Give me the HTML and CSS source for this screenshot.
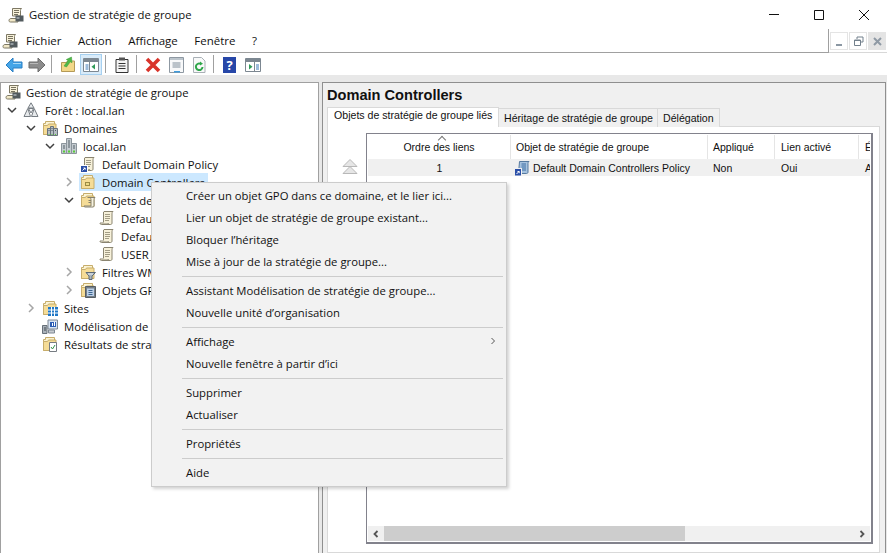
FILE: index.html
```html
<!DOCTYPE html>
<html lang="fr">
<head>
  <meta charset="UTF-8" />
  <title>Gestion de stratégie de groupe</title>
  <link rel="stylesheet" href="styles.css">
</head>
<body>
  <svg class="defs" width="0" height="0">
    <symbol id="i-scroll" viewBox="0 0 16 16">
      <path d="M5 1.500h9c-.8.6-1 1.300-1 2.300V13c0 1-.7 1.500-1.500 1.500h-9C1.700 14.500 1 14 1 13h8c0 .8.500 1 1 1" fill="#f7f1da" stroke="#8a8470"/>
      <path d="M5 1.500c-.6.400-1 1-1 2V13h6V3.500c0-1 .4-1.500 1-2z" fill="#f7f1da"/>
      <path d="M4.500 1.800V12.500M5 1.500h9" fill="none" stroke="#8a8470"/>
      <path d="M6 4.500h5M6 6.500h5M6 8.500h5M6 10.500h4" stroke="#a39d86"/>
    </symbol>
    <symbol id="i-link" viewBox="0 0 16 16">
      <use href="#i-scroll"/>
      <rect x="0" y="9" width="8" height="7" fill="#fff"/>
      <rect x="1" y="10" width="6" height="6" fill="#2b4fa8"/>
      <path d="M2.500 14.500l2.500-2.500M3.500 12h1.700v1.700" stroke="#fff" fill="none"/>
    </symbol>
    <symbol id="i-console" viewBox="0 0 16 16">
      <path d="M4.500 1.500h9c-.6.500-1 1-1 2V9h-8z" fill="#f7f1da" stroke="#7d7864"/>
      <path d="M1 13.500c0-1 .8-2 2-2h7v3.500H2.500C1.500 15 1 14.500 1 13.500z" fill="#f1e8c8" stroke="#7d7864"/>
      <path d="M6 3.500h5M6 5.500h5M6 7.500h4" stroke="#77725e"/>
      <rect x="7.500" y="8.500" width="8" height="6" fill="#525a5e"/>
      <rect x="8.500" y="10.500" width="3" height="1" fill="#d3dcdf"/>
    </symbol>
    <symbol id="i-folder" viewBox="0 0 16 16">
      <path d="M1.500 14.500V3.500h2V1.500h9v4h1v9z" fill="#fbf3d3" stroke="#c7ad6b"/>
      <path d="M1.500 14.500V5.500h4l1-1.500h7.500v10.500z" fill="#f5dc97" stroke="#c7ad6b"/>
    </symbol>
    <symbol id="i-ou" viewBox="0 0 16 16">
      <use href="#i-folder"/>
      <rect x="5" y="8" width="5" height="4" fill="#9c8a44"/>
      <rect x="6" y="9" width="3" height="2" fill="#ecd884"/>
    </symbol>
    <symbol id="i-servers" viewBox="0 0 16 16">
      <path d="M.5 5.500h5v10h-5zM5.500.5h5v15h-5zM10.500 5.500h5v10h-5z" fill="#c4cbd0" stroke="#8c959c"/>
      <path d="M2 8h2M2 10h2M7 3h2M7 5h2M7 7h2M7 9h2M12 8h2M12 10h2" stroke="#556068"/>
      <path d="M2 13.500h2M7 13.500h2M12 13.500h2" stroke="#59cc3a" stroke-width="2"/>
    </symbol>
    <symbol id="i-domains" viewBox="0 0 16 16">
      <use href="#i-folder"/>
      <path d="M5.500 8.500h3v7h-3zM8.500 6.500h3v9h-3zM11.500 8.500h4v7h-4z" fill="#b6bec4" stroke="#69737b"/>
      <path d="M6.500 14.500h1M9.500 14.500h1M13 14.500h1" stroke="#59cc3a"/>
      <path d="M6.500 10.500h1M9.500 8.500h1M9.500 10.500h1M13 10.500h1" stroke="#4e565e"/>
    </symbol>
    <symbol id="i-forest" viewBox="0 0 16 16">
      <path d="M8 .8l3 5.200H5z" fill="#e6e9eb" stroke="#777d83"/>
      <path d="M4.800 6.500L1 14.500h6.500zM11.200 6.500L15 14.500H8.500z" fill="#e6e9eb" stroke="#777d83"/>
      <path d="M5.500 6.500h5L8 11z" fill="#f6f7f8" stroke="#777d83"/>
    </symbol>
    <symbol id="i-gpos" viewBox="0 0 16 16">
      <use href="#i-folder"/>
      <path d="M7.500 5.500h7.500c-.6.500-1 1-1 2V14c0 .7-.5 1-1 1H5c-.6 0-1-.4-1-1h7V7.500c0-.8-.5-1.500-1-2" fill="#f8f3df" stroke="#85806c"/>
      <path d="M8.500 8.500h2.500M8.500 10.500h2.500" stroke="#85806c"/>
    </symbol>
    <symbol id="i-filter" viewBox="0 0 16 16">
      <use href="#i-folder"/>
      <path d="M6 8.500h9.500L12 12v3.500h-3V12z" fill="#aab4bd" stroke="#5c6a77"/>
      <path d="M8 10h5" stroke="#e8eef2"/>
    </symbol>
    <symbol id="i-gpo-box" viewBox="0 0 16 16">
      <use href="#i-folder"/>
      <path d="M5.500 4.500h10v11h-10z" fill="#757f88" stroke="#565d64"/>
      <path d="M7 6.500h7v7.500H7z" fill="#bcd0e8"/>
      <path d="M8.500 8.500h4M8.500 10.500h4M8.500 12.500h4" stroke="#3d658f"/>
    </symbol>
    <symbol id="i-sites" viewBox="0 0 16 16">
      <use href="#i-folder"/>
      <path d="M6 7h10v9H6z" fill="#1f77c6"/>
      <path d="M9.500 7v9M12.500 7v9M6 10h10M6 13h10" stroke="#fff"/>
    </symbol>
    <symbol id="i-model" viewBox="0 0 16 16">
      <path d="M6 2h9.500v9H6z" fill="#d6e3f3" stroke="#7e8894"/>
      <rect x="8" y="4" width="6" height="5" fill="#2b5db4"/>
      <path d="M10 5h1v3h-1zM12 4h1v4h-1z" fill="#fff"/>
      <path d="M.5 7.500h4.500v8H.5z" fill="#aab2ba" stroke="#677079"/>
      <path d="M2 10h2M2 12h2" stroke="#3e464e"/>
      <path d="M6.500 12h6v3h-6z" fill="#c7ccd1" stroke="#7e8894"/>
    </symbol>
    <symbol id="i-results" viewBox="0 0 16 16">
      <use href="#i-folder"/>
      <path d="M7.500 6.500h7v9h-7z" fill="#fff" stroke="#767c82"/>
      <path d="M9 11l1.500 2L13 9" stroke="#35924a" fill="none"/>
    </symbol>
    <symbol id="i-gpo-blue" viewBox="0 0 16 16">
      <path d="M5.500 1.500h9.500c-.8.500-1 1.200-1 2V12c0 1-.7 1.500-1.500 1.500h-8z" fill="#a6c2df" stroke="#55799f"/>
      <path d="M7.500 4h4.500M7.500 6h4.500M7.500 8h4.500M7.500 10h4.500" stroke="#3c6ea4"/>
      <rect x="0" y="8" width="8" height="8" fill="#f0f0f0"/>
      <rect x="1" y="9" width="6" height="6.500" fill="#2b4fa8"/>
      <path d="M2.500 14l2.500-2.500M3.500 11.500h1.700v1.700" stroke="#fff" fill="none"/>
    </symbol>
    <symbol id="i-chev-open" viewBox="0 0 12 12">
      <path d="M2 4l4 4 4-4" fill="none" stroke="#404040" stroke-width="1.500"/>
    </symbol>
    <symbol id="i-chev-closed" viewBox="0 0 12 12">
      <path d="M4 2l4 4-4 4" fill="none" stroke="#a6a6a6" stroke-width="1.500"/>
    </symbol>
  </svg>

  <div class="titlebar">
    <svg class="ico title-ico"><use href="#i-console"/></svg>
    <span class="title-text">Gestion de stratégie de groupe</span>
    <div class="win-btns">
      <svg width="12" height="12" viewBox="0 0 12 12"><path d="M1 5.500h10" stroke="#111"/></svg>
      <svg width="12" height="12" viewBox="0 0 12 12"><path d="M1.500 1.500h9v9h-9z" fill="none" stroke="#111"/></svg>
      <svg width="12" height="12" viewBox="0 0 12 12"><path d="M1 1l10 10M11 1L1 11" stroke="#111"/></svg>
    </div>
  </div>

  <div class="menubar">
    <div class="menu-left">
      <svg class="ico menu-ico"><use href="#i-console"/></svg>
      <span class="menu-item">Fichier</span>
      <span class="menu-item">Action</span>
      <span class="menu-item">Affichage</span>
      <span class="menu-item">Fenêtre</span>
      <span class="menu-item">?</span>
    </div>
    <div class="mdi-btns">
      <span class="mdi"><svg width="11" height="11" viewBox="0 0 11 11"><path d="M2 9h6" stroke="#8b97a3" stroke-width="2"/></svg></span>
      <span class="mdi"><svg width="11" height="11" viewBox="0 0 11 11"><path d="M4 3V1h6v5H8M1.500 4h6v5.500h-6z" fill="none" stroke="#73808c"/><path d="M1 4.500h7" stroke="#73808c"/></svg></span>
      <span class="mdi mdi-close"><svg width="11" height="11" viewBox="0 0 11 11"><path d="M2 2l7 7M9 2L2 9" stroke="#8f9aa5" stroke-width="2"/></svg></span>
    </div>
  </div>

  <div class="toolbar">
    <span class="tool"><svg width="18" height="16" viewBox="0 0 18 16"><path d="M1 8l7-7v4h9v6H8v4z" fill="#45a5e8" stroke="#2a7fc4"/><path d="M8 6.500h8" stroke="#a5d8f7"/></svg></span>
    <span class="tool"><svg width="18" height="16" viewBox="0 0 18 16"><path d="M17 8l-7-7v4H1v6h9v4z" fill="#8d8d8d" stroke="#6c6c6c"/><path d="M2 6.500h8" stroke="#b9b9b9"/></svg></span>
    <span class="tool-sep"></span>
    <span class="tool"><svg width="16" height="17" viewBox="0 0 16 17"><path d="M1.500 15.500v-9h5l1-1.500h7v10.500z" fill="#f3d788" stroke="#b59a57"/><path d="M4 10l4-5.500L6.300 3.500 11.500 1l.5 5.800-1.700-1L6.500 11z" fill="#4fb848" stroke="#3c9838" stroke-width=".5"/></svg></span>
    <span class="tool tool-on"><svg width="16" height="14" viewBox="0 0 16 14"><path d="M.5.500h15v13H.5z" fill="#fff" stroke="#7c8791"/><path d="M1 1h14v3H1z" fill="#7c8791"/><path d="M6.500 4v9" stroke="#7c8791"/><path d="M2.500 7h3M2.500 9h3M2.500 11h3" stroke="#3b78b8"/><path d="M12 6v5.500L8.500 8.700z" fill="#2f9a58"/></svg></span>
    <span class="tool-sep"></span>
    <span class="tool"><svg width="14" height="16" viewBox="0 0 14 16"><path d="M1 2.500h12v13H1z" fill="#f4f4f4" stroke="#333"/><path d="M4 .5h6v3H4z" fill="#555"/><path d="M3.500 6.500h7M3.500 9h7M3.500 11.500h7" stroke="#333"/></svg></span>
    <span class="tool-sep"></span>
    <span class="tool"><svg width="16" height="16" viewBox="0 0 16 16"><path d="M2 2l12 12M14 2L2 14" stroke="#d9342b" stroke-width="3.600"/></svg></span>
    <span class="tool"><svg width="15" height="16" viewBox="0 0 15 16"><path d="M.5.500h14v15H.5z" fill="#f8f9fa" stroke="#8e98a2"/><path d="M1 1h13v2H1z" fill="#bcc5cc"/><path d="M3.500 6h8M3.500 8h8M3.500 10h8" stroke="#7f8d9a"/><path d="M5 14h6v1.500H5z" fill="#3f9bdb"/></svg></span>
    <span class="tool"><svg width="14" height="16" viewBox="0 0 14 16"><path d="M1.500.5h8l3.500 3.500v11.500H1.500z" fill="#f8f9f9" stroke="#a9b0b6"/><path d="M10.500 10a3.300 3.300 0 1 1-1.500-3" fill="none" stroke="#2ea64a" stroke-width="2"/><path d="M8 4.500l3 2.300-3 1.700z" fill="#2ea64a"/></svg></span>
    <span class="tool-sep"></span>
    <span class="tool"><svg width="14" height="16" viewBox="0 0 14 16"><rect x="0" y="0" width="13" height="16" fill="#2747a8"/><text x="6.500" y="13" class="help-mark">?</text></svg></span>
    <span class="tool"><svg width="16" height="14" viewBox="0 0 16 14"><path d="M.5.500h15v13H.5z" fill="#fff" stroke="#7c8791"/><path d="M1 1h14v3H1z" fill="#7c8791"/><path d="M9.500 4v9" stroke="#7c8791"/><path d="M11 7h3M11 9h3M11 11h3" stroke="#3b78b8"/><path d="M4 6v5.500L7.500 8.700z" fill="#2f9a58"/></svg></span>
  </div>

  <div class="main">
    <div class="tree">
      <div class="node root"><svg class="ico"><use href="#i-console"/></svg><span class="lbl">Gestion de stratégie de groupe</span></div>
      <div class="node lv1"><svg class="chev"><use href="#i-chev-open"/></svg><svg class="ico"><use href="#i-forest"/></svg><span class="lbl">Forêt : local.lan</span></div>
      <div class="node lv2"><svg class="chev"><use href="#i-chev-open"/></svg><svg class="ico"><use href="#i-domains"/></svg><span class="lbl">Domaines</span></div>
      <div class="node lv3"><svg class="chev"><use href="#i-chev-open"/></svg><svg class="ico"><use href="#i-servers"/></svg><span class="lbl">local.lan</span></div>
      <div class="node lv4"><span class="chev"></span><svg class="ico"><use href="#i-link"/></svg><span class="lbl">Default Domain Policy</span></div>
      <div class="node lv4"><svg class="chev"><use href="#i-chev-closed"/></svg><span class="selected"><svg class="ico"><use href="#i-ou"/></svg><span class="lbl">Domain Controllers</span></span></div>
      <div class="node lv4"><svg class="chev"><use href="#i-chev-open"/></svg><svg class="ico"><use href="#i-gpos"/></svg><span class="lbl">Objets de stratégie de groupe</span></div>
      <div class="node lv5"><span class="chev"></span><svg class="ico"><use href="#i-scroll"/></svg><span class="lbl">Default Domain Policy</span></div>
      <div class="node lv5"><span class="chev"></span><svg class="ico"><use href="#i-scroll"/></svg><span class="lbl">Default Domain Controllers Policy</span></div>
      <div class="node lv5"><span class="chev"></span><svg class="ico"><use href="#i-scroll"/></svg><span class="lbl">USER_Policy</span></div>
      <div class="node lv4"><svg class="chev"><use href="#i-chev-closed"/></svg><svg class="ico"><use href="#i-filter"/></svg><span class="lbl">Filtres WMI</span></div>
      <div class="node lv4"><svg class="chev"><use href="#i-chev-closed"/></svg><svg class="ico"><use href="#i-gpo-box"/></svg><span class="lbl">Objets GPO Starter</span></div>
      <div class="node lv2"><svg class="chev"><use href="#i-chev-closed"/></svg><svg class="ico"><use href="#i-sites"/></svg><span class="lbl">Sites</span></div>
      <div class="node lv2"><span class="chev"></span><svg class="ico"><use href="#i-model"/></svg><span class="lbl">Modélisation de stratégie de groupe</span></div>
      <div class="node lv2"><span class="chev"></span><svg class="ico"><use href="#i-results"/></svg><span class="lbl">Résultats de stratégie de groupe</span></div>
    </div>

    <div class="details">
      <h2 class="details-title">Domain Controllers</h2>
      <div class="tabs">
        <span class="tab tab-active">Objets de stratégie de groupe liés</span>
        <span class="tab">Héritage de stratégie de groupe</span>
        <span class="tab">Délégation</span>
      </div>
      <div class="tab-page">
        <div class="move-btns">
          <svg width="16" height="16" viewBox="0 0 16 16"><path d="M8 .5l7 7H1zM8 7.500l7 7H1z" fill="#e6e6e6" stroke="#b8b8b8"/></svg>
        </div>
        <div class="list">
          <div class="list-body">
            <div class="list-head">
              <span class="col col1 head-sort">Ordre des liens</span>
              <span class="col col2">Objet de stratégie de groupe</span>
              <span class="col col3">Appliqué</span>
              <span class="col col4">Lien activé</span>
              <span class="col col5">État</span>
            </div>
            <div class="list-row">
              <span class="col col1">1</span>
              <span class="col col2 cell-gpo"><svg class="ico"><use href="#i-gpo-blue"/></svg>Default Domain Controllers Policy</span>
              <span class="col col3">Non</span>
              <span class="col col4">Oui</span>
              <span class="col col5">Activé</span>
            </div>
          </div>
          <div class="hscroll">
            <span class="sb-arrow"><svg width="8" height="8" viewBox="0 0 8 8"><path d="M5.500 1L2.500 4l3 3" fill="none" stroke="#555" stroke-width="1.800"/></svg></span>
            <span class="sb-track"><span class="sb-thumb"></span></span>
            <span class="sb-arrow"><svg width="8" height="8" viewBox="0 0 8 8"><path d="M2.500 1l3 3-3 3" fill="none" stroke="#555" stroke-width="1.800"/></svg></span>
          </div>
        </div>
      </div>
    </div>
  </div>

  <div class="ctx-menu">
    <div class="ctx-item">Créer un objet GPO dans ce domaine, et le lier ici...</div>
    <div class="ctx-item">Lier un objet de stratégie de groupe existant...</div>
    <div class="ctx-item">Bloquer l’héritage</div>
    <div class="ctx-item">Mise à jour de la stratégie de groupe...</div>
    <div class="ctx-sep"></div>
    <div class="ctx-item">Assistant Modélisation de stratégie de groupe...</div>
    <div class="ctx-item">Nouvelle unité d’organisation</div>
    <div class="ctx-sep"></div>
    <div class="ctx-item ctx-sub">Affichage<svg width="6" height="8" viewBox="0 0 6 8"><path d="M1.500 1l3 3-3 3" fill="none" stroke="#555"/></svg></div>
    <div class="ctx-item">Nouvelle fenêtre à partir d’ici</div>
    <div class="ctx-sep"></div>
    <div class="ctx-item">Supprimer</div>
    <div class="ctx-item">Actualiser</div>
    <div class="ctx-sep"></div>
    <div class="ctx-item">Propriétés</div>
    <div class="ctx-sep"></div>
    <div class="ctx-item">Aide</div>
  </div>
</body>
</html>
```

FILE: styles.css
```css
* {
  box-sizing: border-box;
}
html, body {
  height: 100%;
}
body {
  margin: 0;
  background: #fff;
  color: #111;
  font-family: "Open Sans", "Noto Sans", sans-serif;
  font-size: 11.3px;
  overflow: hidden;
  display: flex;
  flex-direction: column;
}
.defs {
  position: absolute;
}
.ico {
  width: 16px;
  height: 16px;
  flex: none;
}

/* title bar */
.titlebar {
  height: 29px;
  flex: none;
  display: flex;
  align-items: center;
  padding-left: 8px;
}
.title-ico {
  margin-right: 5px;
}
.title-text {
  flex: 1;
}
.win-btns {
  display: flex;
  gap: 33px;
  padding-right: 17px;
}

/* menu */
.menubar {
  height: 24px;
  display: flex;
  flex: none;
}
.menu-left {
  flex: 1;
  display: flex;
  align-items: center;
  padding-left: 2px;
  font-size: 11.5px;
  border-bottom: 1px solid #a0a0a0;
  border-right: 1px solid #a0a0a0;
}
.menu-ico {
  margin-right: 8px;
}
.menu-item {
  margin-right: 16.500px;
}
.mdi-btns {
  width: 58px;
  display: flex;
  gap: 1px;
  padding: 3px 0 3px 1px;
  border-bottom: 1px solid #d8d8d8;
}
.mdi {
  width: 18px;
  height: 18px;
  display: flex;
  align-items: center;
  justify-content: center;
  border: 1px solid #e4e4e4;
}
.mdi-close {
  background: #e4e4e4;
}

/* toolbar */
.toolbar {
  height: 22px;
  flex: none;
  display: flex;
  align-items: flex-end;
  padding-left: 3px;
}
.tool {
  width: 22px;
  height: 21px;
  margin-right: 1px;
  display: flex;
  align-items: center;
  justify-content: center;
  border: 1px solid transparent;
}
.tool-on {
  background: #d9ebf9;
  border-color: #a6d0f0;
}
.tool-sep {
  width: 1px;
  height: 18px;
  background: #a0a0a0;
  margin: 0 5px 2px 2px;
}
.help-mark {
  fill: #fff;
  font-size: 13px;
  font-weight: bold;
  text-anchor: middle;
}

/* main panes */
.main {
  flex: 1;
  min-height: 0;
  display: flex;
  gap: 3px;
  background: #e8e8e8;
  padding-top: 7px;
}
.tree {
  width: 319px;
  flex: none;
  background: #fff;
  border: 1px solid #a0a0a0;
  border-bottom: none;
}
.node {
  height: 18px;
  display: flex;
  align-items: center;
  white-space: nowrap;
  overflow: hidden;
}
.root { padding-left: 4px; }
.lv1 { padding-left: 5px; }
.lv2 { padding-left: 24px; }
.lv3 { padding-left: 43px; }
.lv4 { padding-left: 62px; }
.lv5 { padding-left: 81px; }
.chev {
  width: 12px;
  height: 12px;
  flex: none;
  margin-right: 5px;
}
.lbl {
  margin-left: 6px;
}
.root .lbl {
  margin-left: 5px;
}
.selected {
  display: flex;
  align-items: center;
  height: 18px;
  margin-left: -1px;
  padding: 0 1px;
  width: 129px;
  background: #cce8ff;
}
.details {
  flex: 1;
  min-width: 0;
  display: flex;
  flex-direction: column;
  background: #f0f0f0;
  border: 1px solid #8f8f8f;
  border-bottom: none;
  padding: 0 5px 0 4px;
  margin-right: 1px;
}
.details-title {
  margin: 0;
  height: 24px;
  line-height: 25px;
  font-family: "Liberation Sans", Arial, sans-serif;
  font-size: 14.600px;
  font-weight: bold;
}
.tabs {
  display: flex;
  height: 20px;
  align-items: flex-end;
  position: relative;
  z-index: 1;
  font-family: "Liberation Sans", Arial, sans-serif;
  font-size: 10.600px;
}
.tab {
  height: 19px;
  line-height: 18px;
  padding: 0 5px;
  background: #f0f0f0;
  border: 1px solid #d9d9d9;
  border-left: none;
  border-bottom: none;
  white-space: nowrap;
}
.tab-active {
  height: 20px;
  width: 172px;
  line-height: 15px;
  background: #fff;
  border-left: 1px solid #d9d9d9;
  padding: 0 6px;
}
.tab:nth-child(2) { width: 159px; }
.tab:nth-child(3) { width: 62px; }
.tab-page {
  flex: 1;
  min-height: 0;
  display: flex;
  background: #fff;
  border: 1px solid #d9d9d9;
  margin-top: -1px;
  padding: 6px 6px 8px 13px;
}
.move-btns {
  width: 25px;
  flex: none;
  padding: 26px 0 0 1px;
}
.list {
  flex: 1;
  min-width: 0;
  display: flex;
  flex-direction: column;
  border: 1px solid #82828c;
  border-width: 1px 2px 2px 1px;
  padding: 1px;
  font-family: "Liberation Sans", Arial, sans-serif;
  font-size: 10.500px;
}
.list-body {
  flex: 1;
  min-height: 0;
  overflow: hidden;
}
.list-head, .list-row {
  display: flex;
  white-space: nowrap;
}
.list-head {
  height: 24px;
  align-items: center;
}
.list-head .col {
  border-right: 1px solid #e5e5e5;
  height: 100%;
  line-height: 24px;
}
.list-row {
  height: 17px;
  align-items: center;
  background: #f0f0f0;
  width: 505px;
}
.col {
  flex: none;
  padding-left: 6px;
  overflow: hidden;
}
.col1 { width: 143px; text-align: center; padding-left: 0; }
.col2 { width: 197px; padding-left: 5px; }
.col3 { width: 67px; padding-left: 5px; }
.col4 { width: 84px; }
.col5 { width: 14px; }
.head-sort {
  position: relative;
}
.head-sort::before {
  content: "";
  position: absolute;
  left: 71px;
  top: 2px;
  width: 5px;
  height: 5px;
  border-left: 1px solid #777;
  border-top: 1px solid #777;
  transform: rotate(45deg);
}
.list-row .cell-gpo {
  display: flex;
  align-items: center;
  gap: 3px;
  padding-left: 3px;
}
.hscroll {
  height: 15px;
  flex: none;
  display: flex;
  background: #f0f0f0;
}
.sb-arrow {
  width: 16px;
  flex: none;
  display: flex;
  align-items: center;
  justify-content: center;
}
.sb-track {
  flex: 1;
  display: block;
}
.sb-thumb {
  display: block;
  width: 301px;
  height: 100%;
  background: #cdcdcd;
}

/* context menu */
.ctx-menu {
  position: absolute;
  left: 151px;
  top: 182px;
  width: 356px;
  background: #f2f2f2;
  border: 1px solid #ccc;
  padding: 2px;
  box-shadow: 2px 2px 3px rgba(0,0,0,0.18);
}
.ctx-item {
  height: 22px;
  line-height: 21px;
  padding-left: 32px;
}
.ctx-sub {
  display: flex;
  align-items: center;
  justify-content: space-between;
  padding-right: 8px;
  padding-bottom: 2px;
}
.ctx-sep {
  height: 1px;
  background: #ccc;
  margin: 3px 1px 3px 28px;
}
```
